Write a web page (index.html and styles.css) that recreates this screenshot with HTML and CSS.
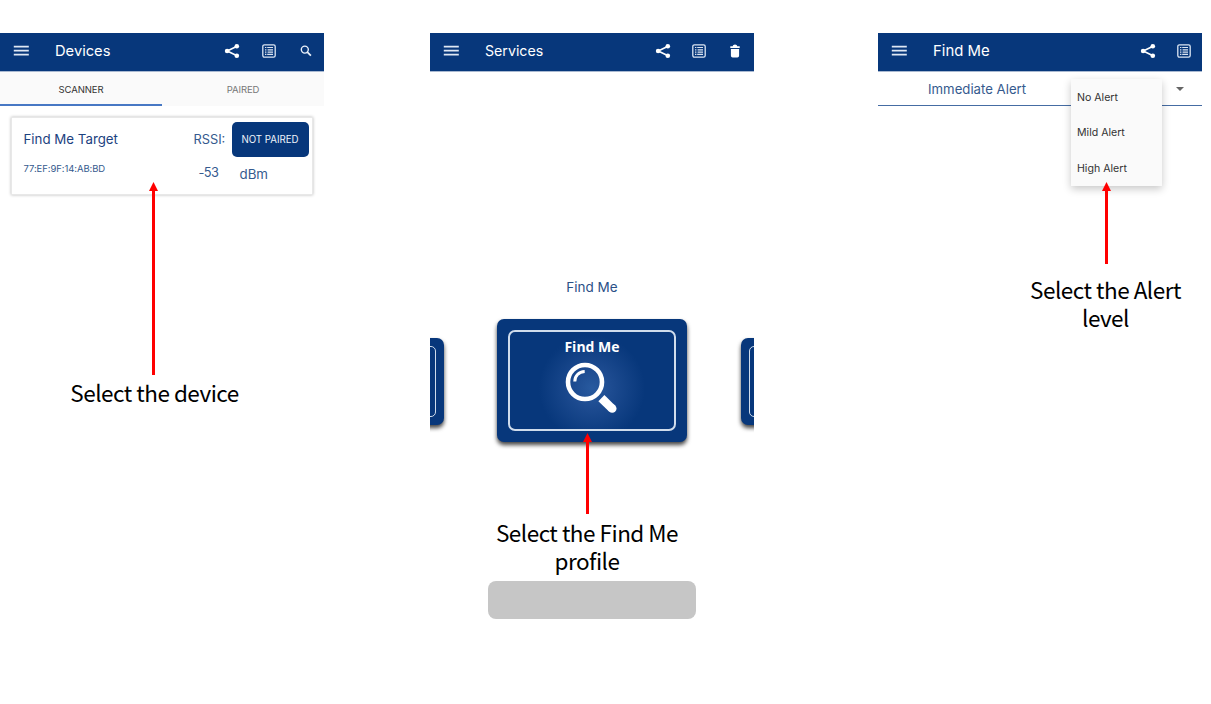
FILE: index.html
```html
<!DOCTYPE html>
<html lang="en">
<head>
<meta charset="utf-8">
<title>Find Me profile</title>
<link rel="stylesheet" href="styles.css">
</head>
<body>
<svg class="defs" width="0" height="0">
  <symbol id="menu" viewBox="0 0 16 12"><path d="M.8 1.6h15M.8 5.6h15M.8 9.6h15" stroke="#dfe8f4" stroke-width="1.7"/></symbol>
  <symbol id="share" viewBox="0 0 16 16"><path d="M13 3.2 3.2 8l9.8 4.8" fill="none" stroke="#fff" stroke-width="1.6"/><g fill="#fff"><circle cx="12.8" cy="3.2" r="2.3"/><circle cx="3.1" cy="8" r="2.3"/><circle cx="12.8" cy="12.8" r="2.3"/></g></symbol>
  <symbol id="list" viewBox="0 0 14 14"><rect x=".8" y=".8" width="12.4" height="12.4" rx="1.6" fill="none" stroke="#dbe5f2" stroke-width="1.3"/><path d="M3 3.5h1.4M5.2 3.5H11M3 5.8h1.4M5.6 5.8H11M3 8.1h1.4M5.6 8.1H11M3 10.4h1.4M5.2 10.4H11" stroke="#dbe5f2" stroke-width="1.2"/></symbol>
  <symbol id="search" viewBox="0 0 12 12"><circle cx="4.8" cy="4.6" r="3.5" fill="none" stroke="#eaf1fa" stroke-width="1.4"/><path d="m7.3 7.1 3.6 3.6" stroke="#eaf1fa" stroke-width="1.7"/></symbol>
  <symbol id="trash" viewBox="0 0 10 14"><path d="M.3 2.3h2.5c0-1.2 1-1.9 2.2-1.9s2.2.7 2.2 1.9h2.5v1.7H.3zM.9 5h8.2v6.6c0 1.2-.7 1.9-1.8 1.9H2.7c-1.1 0-1.8-.7-1.8-1.9z" fill="#fff"/></symbol>
  <symbol id="arrowhead" viewBox="0 0 9 9"><path d="M4.5 0 9 9H0z" fill="#f00"/></symbol>
</svg>
<main class="stage">
  <section class="phone">
    <header class="bar">
      <svg class="menu"><use href="#menu"/></svg>
      <h1 class="title devices">Devices</h1>
      <svg class="share"><use href="#share"/></svg>
      <svg class="list"><use href="#list"/></svg>
      <svg class="search"><use href="#search"/></svg>
    </header>
    <nav class="tabs"><span class="tab active">SCANNER</span><span class="tab">PAIRED</span></nav>
    <article class="device">
      <div class="identity"><div class="name">Find Me Target</div><div class="address">77:EF:9F:14:AB:BD</div></div>
      <div class="signal"><div class="rssi">RSSI:</div><div class="value">-53</div></div>
      <div class="state"><button class="pair">NOT PAIRED</button><div class="unit">dBm</div></div>
    </article>
  </section>

  <section class="phone">
    <header class="bar">
      <svg class="menu"><use href="#menu"/></svg>
      <h1 class="title services">Services</h1>
      <svg class="share"><use href="#share"/></svg>
      <svg class="list"><use href="#list"/></svg>
      <svg class="trash"><use href="#trash"/></svg>
    </header>
    <div class="profile">Find Me</div>
    <div class="carousel">
      <div class="card side"><div class="frame"></div></div>
      <div class="card main"><div class="frame">
        <div class="caption">Find Me</div>
        <svg class="glass" viewBox="0 0 54 52"><circle cx="20" cy="20" r="17" fill="none" stroke="#fff" stroke-width="4.6"/><path d="M9.8 19.5c0-5.5 4-9.7 9.9-10" fill="none" stroke="#fff" stroke-width="3"/><path d="m36.4 36.2 10.6 10.3" stroke="#fff" stroke-width="8.6"/><circle cx="47.2" cy="46.5" r="4.3" fill="#fff"/></svg>
      </div></div>
      <div class="card side"><div class="frame"></div></div>
    </div>
    <div class="placeholder"></div>
  </section>

  <section class="phone">
    <header class="bar">
      <svg class="menu"><use href="#menu"/></svg>
      <h1 class="title findme">Find Me</h1>
      <svg class="share"><use href="#share"/></svg>
      <svg class="list"><use href="#list"/></svg>
    </header>
    <div class="setting"><span class="service">Immediate Alert</span><svg class="caret" viewBox="0 0 8 4"><path d="M0 0h8L4 4z" fill="#666"/></svg></div>
    <ul class="dropdown"><li class="no">No Alert</li><li class="mild">Mild Alert</li><li class="high">High Alert</li></ul>
  </section>

  <div class="note note-device"><svg class="head"><use href="#arrowhead"/></svg><div class="shaft"></div><p class="text">Select the device</p></div>
  <div class="note note-profile"><svg class="head"><use href="#arrowhead"/></svg><div class="shaft"></div><p class="text">Select the Find Me<br>profile</p></div>
  <div class="note note-level"><svg class="head"><use href="#arrowhead"/></svg><div class="shaft"></div><p class="text">Select the Alert<br>level</p></div>
</main>
</body>
</html>
```
FILE: styles.css
```css
* { box-sizing: border-box; }
body { margin: 0; background: #fff; font-family: Inter, "Liberation Sans", sans-serif; }
.defs { position: absolute; }
.stage { position: relative; display: grid; grid-template-columns: 324px 342px 324px; column-gap: 106px; width: 1211px; height: 704px; padding-top: 33px; overflow: hidden; }
.phone { position: relative; width: 324px; height: 671px; clip-path: inset(0); }

.bar { display: flex; align-items: center; height: 39px; padding: 0 12px 3px 13px; background: #07377b; border-bottom: 1px solid #a9b9d1; color: #fff; }
.menu { width: 16px; height: 12px; margin-right: 26px; flex: none; }
.title { margin: 0; flex: 1; font-size: 14.7px; font-weight: 400; line-height: 20px; padding-top: 1px; }
.services { font-size: 14.2px; }
.findme { font-size: 14.9px; }
.share { width: 16px; height: 16px; margin-right: 21px; }
.list { width: 14px; height: 14px; margin-right: 24px; }
.search { width: 12px; height: 12px; }
.trash { width: 10px; height: 14px; margin-right: 2px; }
.trash, .search { flex: none; }
.list:last-child { margin-right: -1px; }
.devices + .share { margin-right: 22px; }

.tabs { display: grid; grid-template-columns: 1fr 1fr; height: 34px; background: #fafafa; font-size: 9.5px; line-height: 35px; text-align: center; }
.tab { color: #777; letter-spacing: -.1px; }
.tab.active { height: 34px; color: #333; border-bottom: 2px solid #4778c4; }

.device { display: flex; height: 78px; margin: 11px 11px 0; padding: 4px 4px 0 11.5px; background: #fff; border: 1px solid #e8e8e8; box-shadow: 0 0 3px #bbb; color: #1c427f; }
.identity { flex: 1; padding-top: 7px; }
.name { font-size: 13.3px; line-height: 20px; }
.address { margin-top: 12px; font-size: 9.5px; line-height: 16px; letter-spacing: -.08px; color: #355a8e; }
.signal { width: 37.5px; padding-top: 8px; font-size: 12.8px; line-height: 20px; color: #355a8e; }
.value { margin-top: 13px; padding-left: 5px; letter-spacing: -.6px; }
.state { width: 77px; }
.pair { display: block; width: 77px; height: 35px; margin-left: .5px; padding: 0; border: 0; border-radius: 5px; background: #07377b; color: #f0f4fa; font: 9.7px Inter, sans-serif; }
.unit { margin-top: 7px; padding-left: 8.5px; font-size: 13.3px; line-height: 20px; color: #355a8e; }

.profile { margin-top: 205px; font-size: 13.5px; line-height: 20px; text-align: center; color: #2b5087; }
.carousel { display: flex; align-items: center; justify-content: center; gap: 53.5px; height: 123px; margin: 21.5px 0 0; }
.card { flex: none; border-radius: 7px; background: #07377b; box-shadow: 0 3px 4px #444; }
.main { width: 190px; height: 123px; padding: 11px; }
.side { width: 134px; height: 87px; margin-top: 2px; padding: 8px; }
.frame { height: 100%; border: 2px solid #cfdcec; border-radius: 7px; }
.side .frame { border-width: 1px; border-radius: 5px; }
.main .frame { display: flex; flex-direction: column; align-items: center; padding-top: 5.5px; background: radial-gradient(circle at 50% 58%, #285a9f 0, #1d4b90 20px, #07377b 53px); }
.caption { color: #fff; font: 700 14px/20px "Open Sans", sans-serif; }
.glass { width: 54px; height: 52px; margin-top: 5px; }
.placeholder { width: 208px; height: 38px; margin: 139px 0 0 58px; border-radius: 8px; background: #c6c6c6; }

.setting { display: flex; align-items: flex-start; justify-content: space-between; height: 34px; padding: 7px 18px 0 50px; border-bottom: 1px solid #456ca3; }
.service { font-size: 13.2px; line-height: 20px; color: #355a8e; }
.caret { width: 8px; height: 4px; margin-top: 8px; }
.dropdown { position: absolute; left: 193px; top: 46px; width: 91px; height: 107px; margin: 0; padding: 1.2px 6px; list-style: none; background: #fafafa; box-shadow: 0 3px 8px rgba(0,0,0,.22); color: #333; font-size: 10.6px; line-height: 35.3px; }

.note { position: absolute; display: flex; flex-direction: column; align-items: center; }
.head { width: 9px; height: 9px; }
.shaft { width: 3px; background: #f00; }
.text { margin: 0; font: 22.5px/28px "Noto Sans CJK SC", sans-serif; letter-spacing: -.5px; color: #000; text-align: center; white-space: nowrap; }
.note-device { left: 53.5px; top: 182px; width: 200px; }
.note-device .shaft { height: 184px; }
.note-device .text { margin-top: 3px; padding-left: 2px; }
.note-profile { left: 487.5px; top: 433px; width: 200px; }
.note-profile .shaft { height: 72px; }
.note-profile .text { margin-top: 4px; padding-right: 1px; }
.note-level { left: 1006.5px; top: 182px; width: 200px; }
.note-level .shaft { height: 73px; }
.note-level .text { margin-top: 11px; padding-right: 2px; }
```
